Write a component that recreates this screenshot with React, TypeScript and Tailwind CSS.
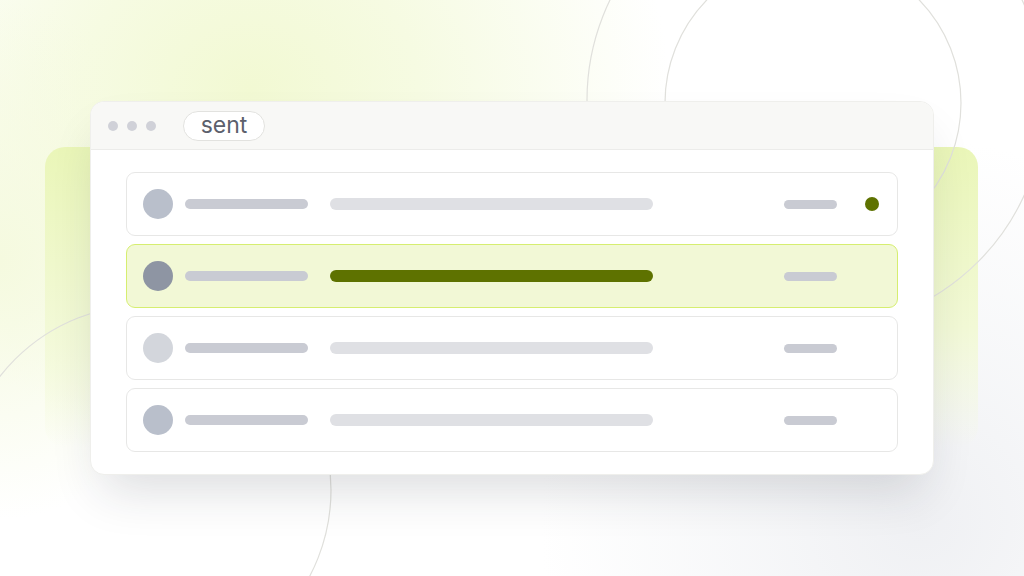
import React from "react";

type Row = { avatar: string; highlight?: boolean; dot?: boolean };

const rows: Row[] = [
  { avatar: "bg-[#b9bfcb]", dot: true },
  { avatar: "bg-[#8e95a3]", highlight: true },
  { avatar: "bg-[#d3d6dc]" },
  { avatar: "bg-[#b9bfcb]" },
];

export default function App() {
  return (
    <div
      className="relative w-[1024px] h-[576px] overflow-hidden bg-white"
      style={{ fontFamily: "Inter, 'Noto Sans', sans-serif" }}
    >
      {/* background glows */}
      <div className="absolute inset-0 bg-[radial-gradient(ellipse_420px_360px_at_250px_90px,#f2f9d3_0%,#f6fbe2_40%,rgba(255,255,255,0)_100%)]" />
      <div className="absolute inset-0 bg-[radial-gradient(ellipse_200px_260px_at_0px_260px,#f5fadf_0%,rgba(255,255,255,0)_100%)]" />
      <div className="absolute inset-0 bg-[radial-gradient(circle_at_920px_520px,#eff0f3_0px,rgba(244,245,247,0.8)_160px,rgba(255,255,255,0)_380px)]" />
      {/* green backdrop */}
      <div className="absolute left-[45px] top-[147px] w-[933px] h-[300px] rounded-[20px] bg-gradient-to-b from-[#eaf6b8] via-[#f2f9d6] via-60% to-[rgba(255,255,255,0)]" />
      {/* decorative circles */}
      <svg className="absolute inset-0" width="1024" height="576" viewBox="0 0 1024 576" fill="none">
        <circle cx="816" cy="100" r="229" stroke="#e0e0dc" strokeWidth="1.2" />
        <circle cx="813" cy="103" r="148" stroke="#e0e0dc" strokeWidth="1.2" />
        <circle cx="146" cy="490" r="185" stroke="#e0e0dc" strokeWidth="1.2" />
      </svg>

      {/* window */}
      <div className="relative ml-[90px] mt-[101px] w-[844px] rounded-[14px] bg-white border border-[#efefec] shadow-[0_26px_50px_-12px_rgba(30,35,50,0.16)] overflow-hidden">
        <div className="h-[48px] bg-[#f8f8f6] border-b border-[#ececea] flex items-center pl-[17px]">
          <div className="flex items-center gap-[9px]">
            <span className="w-[10px] h-[10px] rounded-full bg-[#d0d1d8]" />
            <span className="w-[10px] h-[10px] rounded-full bg-[#d0d1d8]" />
            <span className="w-[10px] h-[10px] rounded-full bg-[#d0d1d8]" />
          </div>
          <div className="ml-[27px] h-[30px] w-[82px] rounded-full border border-[#e2e2df] bg-white flex items-center justify-center text-[23px] leading-none text-[#5c606c]">
            sent
          </div>
        </div>
        <div className="px-[35px] pt-[22px] pb-[22px] flex flex-col gap-[8px]">
          {rows.map((r, i) => (
            <div
              key={i}
              className={
                "h-[64px] rounded-[9px] border flex items-center pl-[16px] pr-[18px] " +
                (r.highlight
                  ? "bg-[#f2f8d6] border-[#d6ee70]"
                  : "bg-white border-[#e7e7e6]")
              }
            >
              <span className={"w-[30px] h-[30px] rounded-full shrink-0 " + r.avatar} />
              <span className="ml-[12px] w-[123px] h-[10px] rounded-full bg-[#c9cbd3]" />
              <span
                className={
                  "ml-[22px] w-[323px] h-[12px] rounded-full " +
                  (r.highlight ? "bg-[#5e7200]" : "bg-[#dfe0e4]")
                }
              />
              <span className="ml-auto w-[53px] h-[9px] rounded-full bg-[#c9cbd3]" />
              <span
                className={
                  "ml-[28px] w-[14px] h-[14px] rounded-full " +
                  (r.dot ? "bg-[#5e7200]" : "bg-transparent")
                }
              />
            </div>
          ))}
        </div>
      </div>
    </div>
  );
}
